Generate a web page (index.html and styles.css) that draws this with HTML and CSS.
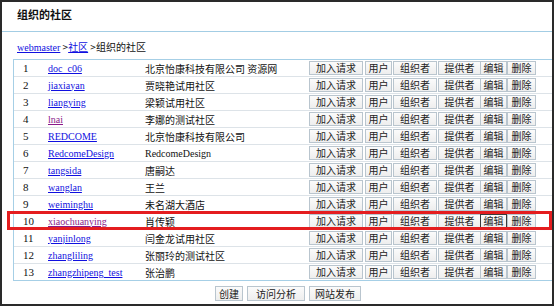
FILE: index.html
```html
<!DOCTYPE html>
<html lang="zh-CN">
<head>
<meta charset="utf-8">
<title>组织的社区</title>
<link rel="stylesheet" href="styles.css">
</head>
<body>
<div class="frame">
  <div class="title">组织的社区</div>
  <div class="crumb"><a href="#" class="lnk">webmaster</a> &gt;<a href="#" class="lnk cn">社区</a> &gt;组织的社区</div>
  <div class="tbl">
    <div class="row"><span class="num">1</span><a class="lnk" href="#">doc_c06</a><span class="desc">北京怡康科技有限公司 资源网</span><span class="btn b1">加入请求</span><span class="btn b2">用户</span><span class="btn b3">组织者</span><span class="btn b4">提供者</span><span class="btn b5">编辑</span><span class="btn b6">删除</span></div>
    <div class="row"><span class="num">2</span><a class="lnk" href="#">jiaxiayan</a><span class="desc">贾晓艳试用社区</span><span class="btn b1">加入请求</span><span class="btn b2">用户</span><span class="btn b3">组织者</span><span class="btn b4">提供者</span><span class="btn b5">编辑</span><span class="btn b6">删除</span></div>
    <div class="row"><span class="num">3</span><a class="lnk" href="#">liangying</a><span class="desc">梁颖试用社区</span><span class="btn b1">加入请求</span><span class="btn b2">用户</span><span class="btn b3">组织者</span><span class="btn b4">提供者</span><span class="btn b5">编辑</span><span class="btn b6">删除</span></div>
    <div class="row"><span class="num">4</span><a class="lnk visited" href="#">lnai</a><span class="desc">李娜的测试社区</span><span class="btn b1">加入请求</span><span class="btn b2">用户</span><span class="btn b3">组织者</span><span class="btn b4">提供者</span><span class="btn b5">编辑</span><span class="btn b6">删除</span></div>
    <div class="row"><span class="num">5</span><a class="lnk" href="#">REDCOME</a><span class="desc">北京怡康科技有限公司</span><span class="btn b1">加入请求</span><span class="btn b2">用户</span><span class="btn b3">组织者</span><span class="btn b4">提供者</span><span class="btn b5">编辑</span><span class="btn b6">删除</span></div>
    <div class="row"><span class="num">6</span><a class="lnk" href="#">RedcomeDesign</a><span class="desc latin">RedcomeDesign</span><span class="btn b1">加入请求</span><span class="btn b2">用户</span><span class="btn b3">组织者</span><span class="btn b4">提供者</span><span class="btn b5">编辑</span><span class="btn b6">删除</span></div>
    <div class="row"><span class="num">7</span><a class="lnk" href="#">tangsida</a><span class="desc">唐嗣达</span><span class="btn b1">加入请求</span><span class="btn b2">用户</span><span class="btn b3">组织者</span><span class="btn b4">提供者</span><span class="btn b5">编辑</span><span class="btn b6">删除</span></div>
    <div class="row"><span class="num">8</span><a class="lnk" href="#">wanglan</a><span class="desc">王兰</span><span class="btn b1">加入请求</span><span class="btn b2">用户</span><span class="btn b3">组织者</span><span class="btn b4">提供者</span><span class="btn b5">编辑</span><span class="btn b6">删除</span></div>
    <div class="row"><span class="num">9</span><a class="lnk" href="#">weiminghu</a><span class="desc">未名湖大酒店</span><span class="btn b1">加入请求</span><span class="btn b2">用户</span><span class="btn b3">组织者</span><span class="btn b4">提供者</span><span class="btn b5">编辑</span><span class="btn b6">删除</span></div>
    <div class="row"><span class="num">10</span><a class="lnk visited" href="#">xiaochuanying</a><span class="desc">肖传颖</span><span class="btn b1">加入请求</span><span class="btn b2">用户</span><span class="btn b3">组织者</span><span class="btn b4">提供者</span><span class="btn b5 active">编辑</span><span class="btn b6">删除</span></div>
    <div class="row"><span class="num">11</span><a class="lnk" href="#">yanjinlong</a><span class="desc">闫金龙试用社区</span><span class="btn b1">加入请求</span><span class="btn b2">用户</span><span class="btn b3">组织者</span><span class="btn b4">提供者</span><span class="btn b5">编辑</span><span class="btn b6">删除</span></div>
    <div class="row"><span class="num">12</span><a class="lnk" href="#">zhangliling</a><span class="desc">张丽玲的测试社区</span><span class="btn b1">加入请求</span><span class="btn b2">用户</span><span class="btn b3">组织者</span><span class="btn b4">提供者</span><span class="btn b5">编辑</span><span class="btn b6">删除</span></div>
    <div class="row"><span class="num">13</span><a class="lnk" href="#">zhangzhipeng_test</a><span class="desc">张治鹏</span><span class="btn b1">加入请求</span><span class="btn b2">用户</span><span class="btn b3">组织者</span><span class="btn b4">提供者</span><span class="btn b5">编辑</span><span class="btn b6">删除</span></div>
  </div>
  <div class="actions">
    <span class="btn a1">创建</span><span class="btn a2">访问分析</span><span class="btn a3">网站发布</span>
  </div>
  <div class="highlight"></div>
</div>
</body>
</html>
```
FILE: styles.css
```css
html, body {
  margin: 0;
  padding: 0;
  background: #ffffff;
}
body {
  font-family: "Noto Sans CJK SC", "Liberation Serif", serif;
  font-size: 10px;
  color: #111;
}
.frame {
  position: relative;
  width: 554px;
  height: 306px;
  box-sizing: border-box;
  border: 2px solid #2a2a2a;
  overflow: hidden;
}
.title {
  height: 29px;
  line-height: 24px;
  padding-left: 15px;
  font-size: 11px;
  font-weight: bold;
  border-bottom: 1px solid #a3cde4;
}
.crumb {
  padding: 9px 0 0 15px;
  line-height: 12px;
  height: 12px;
}
.lnk {
  font-family: "Liberation Serif", serif;
  color: #1010e0;
  text-decoration: underline;
}
.lnk.cn {
  font-family: "Noto Sans CJK SC", sans-serif;
}
.lnk.visited {
  color: #8a1a8a;
}
.tbl {
  margin: 6px 0 0 11px;
  border: 1px solid #a6cfe6;
  border-right: none;
}
.row {
  display: grid;
  grid-template-columns: 25px 97px 164px 54px 27px 44px 43px 27px 30px;
  column-gap: 0;
  align-items: center;
  height: 16px;
  border-bottom: 1px solid #dde3e8;
  padding-left: 9px;
}
.row:last-child {
  border-bottom: none;
}
.num {
  font-family: "Liberation Serif", serif;
  font-size: 11px;
}
.desc {
  white-space: nowrap;
}
.desc.latin {
  font-family: "Liberation Serif", serif;
}
.btn {
  display: inline-block;
  box-sizing: border-box;
  height: 14px;
  line-height: 12px;
  text-align: center;
  background: linear-gradient(#fbfbfb, #eeeeee);
  border: 1px solid #b9c5ce;
  color: #222;
  white-space: nowrap;
}
.row .btn {
  margin-right: 3px;
}
.row .b1 { width: 54px; margin-right: 0; }
.row .b2 { width: 27px; margin-left: 2px; margin-right: -2px; }
.row .b3 { width: 44px; margin-left: 3px; margin-right: -3px; }
.row .b4 { width: 43px; margin-left: 4px; margin-right: -4px; }
.row .b5 { width: 27px; margin-left: 3px; margin-right: -3px; }
.row .b6 { width: 29px; margin-left: 3px; margin-right: -3px; }
.btn.active {
  border-color: #3a3a3a;
}
.actions {
  display: flex;
  justify-content: center;
  gap: 4px;
  padding-left: 22px;
  margin-top: 5px;
}
.actions .btn {
  height: 15px;
  line-height: 13px;
}
.a1 { width: 28px; }
.a2 { width: 58px; }
.a3 { width: 52px; }
.highlight {
  position: absolute;
  left: 5px;
  top: 209px;
  width: 545px;
  height: 19px;
  box-sizing: border-box;
  border: 3px solid #e41d1f;
}
```
